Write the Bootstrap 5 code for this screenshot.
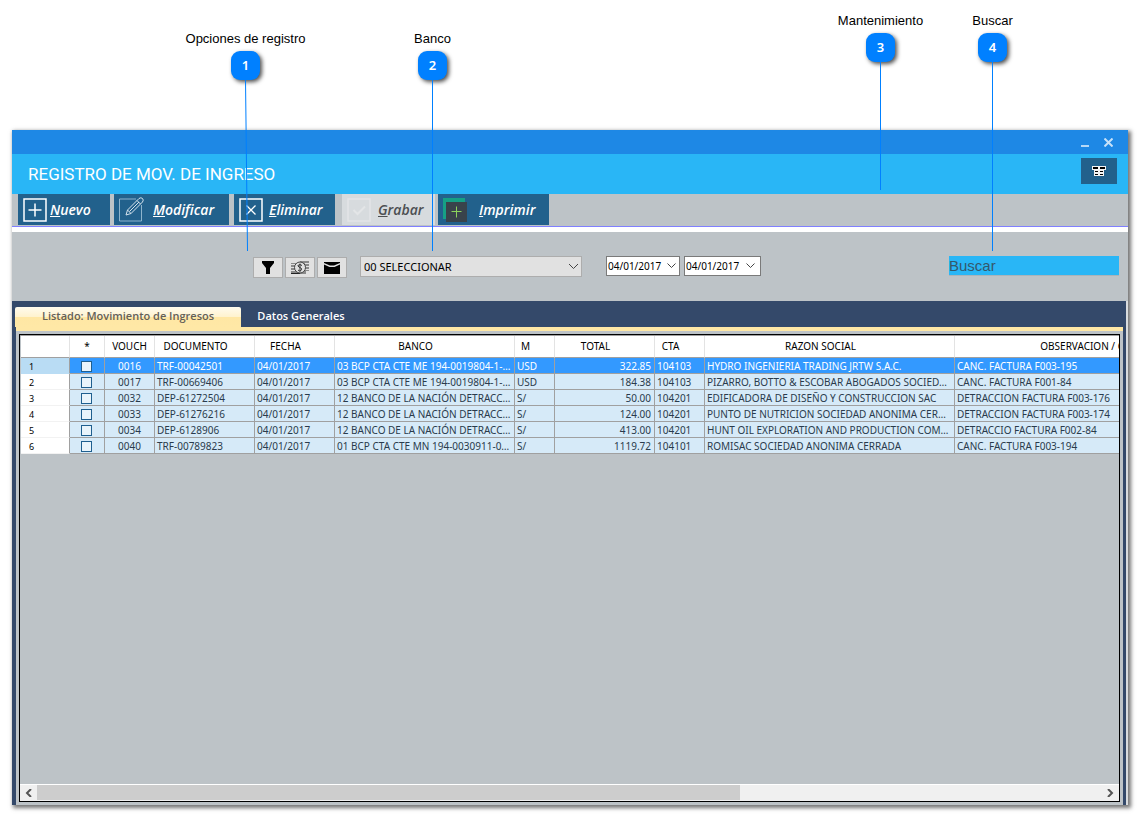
<!DOCTYPE html>
<html lang="es">
<head>
<meta charset="utf-8">
<meta name="viewport" content="width=device-width, initial-scale=1">
<title>Registro de mov. de ingreso</title>
<link href="https://cdn.jsdelivr.net/npm/bootstrap@5.3.0/dist/css/bootstrap.min.css" rel="stylesheet">
<style>
  :root { --navy: #34496a; --silver: #bdc3c7; --steel: #22618c; --sky: #29b6f6; --cream: #ffe8a6; --pin: #0080ff; }
  body { font-family: "Noto Sans", "Open Sans", sans-serif; font-size: 10px; color: #000; background: #fff; }
  .page { min-height: 100vh; padding: 130px 15px 9px 12px; }
  .window { background: var(--silver); box-shadow: 2px 2px 4px 1px rgba(0,0,0,.55); }
  .titlebar { height: 24px; background: #1e88e5; padding-right: 15px; gap: 15px; }
  .titlebar button, .header-bar button, .h-scroll button { border: 0; padding: 0; background: none; display: flex; align-items: center; justify-content: center; }
  .header-bar { height: 40px; background: var(--sky); padding: 0 11px 0 16px; }
  .header-bar h1 { font: 400 17px/20px Roboto, sans-serif; color: #fff; margin: 0; }
  .header-bar button { width: 36px; height: 26px; background: var(--steel); margin-bottom: 6px; }
  .tools { height: 33px; padding-left: 6px; border-bottom: 1px solid #8080ff; }
  .tool { height: 31px; border: 0; border-radius: 0; padding: 0 0 0 5px; background: var(--steel); color: #fff; font: italic 600 14px/20px "Open Sans", sans-serif; display: flex; align-items: center; text-align: left; white-space: nowrap; }
  .tool svg { flex: none; }
  .tool:disabled { background: #d7dbde; color: #4c4f52; }
  .w-nuevo { width: 92px; gap: 3px; margin-right: 4px; }
  .w-modificar { width: 115px; gap: 9px; margin-right: 5px; }
  .w-eliminar { width: 101px; gap: 6px; margin-right: 7px; }
  .w-grabar { width: 93px; gap: 7px; margin-right: 3px; }
  .w-imprimir { width: 111px; gap: 12px; }
  .filters { height: 74px; border-top: 5px solid #fff; padding: 24px 9px 0 241px; }
  .mini { width: 30px; height: 21px; margin: 1px 2px 0 0; padding: 0; border: 1px solid #adadad; background: #e1e1e1; display: flex; align-items: center; justify-content: center; }
  .bank { width: 222px; height: 21px; margin: 0 24px 0 11px; }
  .bank select { appearance: none; width: 100%; height: 100%; border: 1px solid #adadad; border-radius: 0; background: #e1e1e1; color: #000; font-size: 11px; line-height: 16px; padding: 0 20px 0 3px; }
  .bank svg { position: absolute; right: 3px; top: 7px; pointer-events: none; }
  .date-box { width: 74px; height: 20px; border: 1px solid #7a7a7a; background: #fff; margin-right: 4px; }
  .date-box.wide { width: 77px; }
  .date-box input { border: 0; padding: 0 0 0 1px; width: 56px; font-size: 10px; line-height: 16px; background: none; color: #000; }
  .date-box button { border: 0; padding: 0; background: none; flex: 1; display: flex; align-items: center; justify-content: center; }
  .search { width: 170px; height: 20px; border: 0; border-bottom: 1px solid #a9b4bb; border-radius: 0; padding: 0; background: var(--sky); font: 15px/18px "Liberation Sans", sans-serif; color: #35586b; }
  .search::placeholder { color: #35586b; opacity: 1; }
  .body-panel { background: var(--navy); border-right: 2px solid #d9dcde; padding: 6px 3px 0 3px; }
  .tab-strip .nav-link { height: 20px; padding: 0; border-radius: 0; color: #fff; font: 600 11px/18px "Open Sans", sans-serif; text-align: center; width: 120px; }
  .tab-strip .nav-link.active { width: 226px; color: #646058; background: linear-gradient(#fffbee, #fff3cf 48%, #ffe7a4 52%, var(--cream)); border-radius: 2px 2px 0 0; }
  .sheet { border-top: 4px solid var(--cream); background: var(--silver); margin-left: 1px; padding: 3px; }
  .grid-box { border: 1px solid #000; overflow: hidden; min-width: 0; }
  .grid-clip { overflow: hidden; border-top: 1px solid #a0a0a0; padding-left: 1px; }
  .grid-table { table-layout: fixed; width: 1233px; border-collapse: separate; border-spacing: 0; margin: 0; }
  .grid-table th, .grid-table td { padding: 0 2px; border-right: 1px solid #a0a0a0; border-bottom: 1px solid #a0a0a0; white-space: nowrap; overflow: hidden; text-overflow: ellipsis; }
  .grid-table thead th { height: 22px; line-height: 21px; background: #fff; font-weight: 400; text-align: center; border-right-color: #e3e3e3; }
  .grid-table thead th.sortable { padding-right: 20px; }
  .grid-table tbody td { height: 16px; line-height: 14px; padding-top: 1px; background: #d6eaf8; color: #2a3b4c; }
  .grid-table tbody td.text-end { padding-right: 3px; }
  .grid-table tbody th { height: 16px; line-height: 12px; background: #fff; font-weight: 400; font-size: 9px; padding: 3px 0 0 8px; border-bottom-color: #f2f2f2; }
  .grid-table tbody tr.current td { background: #3399ff; color: #fff; }
  .grid-table tbody tr.current th { background: #b9dcf4; border-bottom-color: #b9dcf4; }
  .grid-table input { appearance: none; display: block; width: 11px; height: 11px; margin: 0 0 0 9px; border: 1px solid #1f5f8f; background: #e9f4fb; }
  .h-scroll { height: 17px; border-top: 1px solid #fff; background: #f0f0f0; }
  .h-scroll button { width: 17px; }
  .h-thumb { width: 64%; background: #cdcdcd; margin-bottom: 1px; }
  .callout-pin { position: absolute; width: 141px; pointer-events: none; font: 13px/16px "Liberation Sans", sans-serif; text-align: center; z-index: 2; }
  .pin-num { width: 29px; height: 29px; border-radius: 9px; background: var(--pin); color: #fff; font: 600 13px/29px "Noto Sans", sans-serif; box-shadow: 2px 2px 4px rgba(0,0,0,.7); }
  .pin-low { top: 31px; } .pin-high { top: 13px; }
  .pin-line { display: block; }
  .at-opciones { left: 175px; } .at-banco { left: 362px; }
  .at-mant { right: 192px; } .at-buscar { right: 80px; }
</style>
</head>
<body>
<div class="page d-flex flex-column position-relative">

  <div class="callout-pin pin-low at-opciones d-flex flex-column align-items-center"><span class="mb-1">Opciones de registro</span><span class="pin-num">1</span>
    <svg class="pin-line" width="7" height="171"><path d="M3.5 0L5.5 171" stroke="#0080ff" stroke-width="1"/></svg></div>
  <div class="callout-pin pin-low at-banco d-flex flex-column align-items-center"><span class="mb-1">Banco</span><span class="pin-num">2</span>
    <svg class="pin-line" width="7" height="171"><path d="M3.5 0V171" stroke="#0080ff"/></svg></div>
  <div class="callout-pin pin-high at-mant d-flex flex-column align-items-center"><span class="mb-1">Mantenimiento</span><span class="pin-num">3</span>
    <svg class="pin-line" width="7" height="128"><path d="M3.5 0V128" stroke="#0080ff"/></svg></div>
  <div class="callout-pin pin-high at-buscar d-flex flex-column align-items-center"><span class="mb-1">Buscar</span><span class="pin-num">4</span>
    <svg class="pin-line" width="7" height="189"><path d="M3.5 0V189" stroke="#0080ff"/></svg></div>

  <main class="window d-flex flex-column flex-grow-1">
    <div class="titlebar d-flex justify-content-end align-items-center">
      <button type="button" aria-label="Minimizar"><svg width="8" height="10"><path d="M0 8h8v2H0z" fill="#b5d8f7"/></svg></button>
      <button type="button" aria-label="Cerrar"><svg width="9" height="9"><path d="M.5.5l8 8M8.500.5l-8 8" stroke="#c6e1f9" stroke-width="2"/></svg></button>
    </div>
    <header class="header-bar d-flex justify-content-between align-items-center">
      <h1>REGISTRO DE MOV. DE INGRESO</h1>
      <button type="button" aria-label="Vista de tabla"><svg width="14" height="10"><path d="M0 0h14v4h-2v6H2V4H0z" fill="#f4f4f4"/><path d="M1 1h5v2H1zM8 1h5v2H8zM3 5h3v1H3zM8 5h3v1H8zM3 8h3v1H3zM8 8h3v1H8z" fill="#000"/></svg></button>
    </header>

    <div class="tools d-flex align-items-start">
      <button type="button" class="tool w-nuevo"><svg width="24" height="24" fill="none" stroke="#fff"><path d="M1 1h22v22H1z" stroke-width="1.5"/><path d="M12 5.500v13M5.500 12h13" stroke-width="1.500"/></svg><span><u>N</u>uevo</span></button>
      <button type="button" class="tool w-modificar"><svg width="25" height="25" fill="none" stroke="#d5e3ed"><path d="M17 2H.5v22h22V8" stroke="#8eb4cd"/><path d="M7 18l1.500-5L20 1.500q2-1.500 3.500 0t0 3.500L12 16.500zM18 3.500L21.500 7M8.500 13l3.500 3.500M10.500 14.500L20 5"/></svg><span><u>M</u>odificar</span></button>
      <button type="button" class="tool w-eliminar"><svg width="24" height="24" fill="none" stroke="#fff"><path d="M1 1h22v22H1z" stroke-width="1.5"/><path d="M7.500 7.500l9 9M16.500 7.500l-9 9" stroke-width="1.300"/></svg><span><u>E</u>liminar</span></button>
      <button type="button" class="tool w-grabar" disabled><svg width="24" height="24" fill="none" stroke="#e3e5e7"><path d="M1 1h22v22H1z" stroke-width="1.500"/><path d="M6.500 12l4 4L18 8.500" stroke-width="2"/></svg><span><u>G</u>rabar</span></button>
      <button type="button" class="tool w-imprimir"><svg width="24" height="24"><path d="M0 0h22v21H0z" fill="#16a085"/><path d="M3 4h21v20H3z" fill="#39434b"/><path d="M13.500 8.500v11M8.500 13.500h10" stroke="#8bd35c"/></svg><span><u>I</u>mprimir</span></button>
    </div>

    <form class="filters d-flex align-items-start">
      <button type="button" class="mini" aria-label="Filtrar"><svg width="12" height="13"><path d="M0 0h12v2L8 7v6H4V7L0 2z"/></svg></button>
      <button type="button" class="mini" aria-label="Pagos"><svg width="18" height="15" fill="none"><path d="M0 3h9V1h9v10h-3v3H0z" fill="#8a8a8a"/><path d="M0 4.500h4M0 7.500h4M0 10.500h4M14 3.500h4M14 6.500h4M14 9.500h4" stroke="#e1e1e1"/><path d="M0 13.500h9" stroke="#222"/><circle cx="9" cy="7.500" r="5.500" fill="#e1e1e1" stroke="#444"/><path d="M11 5.500q-2-1.500-3.500-.5t.5 2 2.500 1.500-.5 2-3-.5M9 3.500v8" stroke="#333"/></svg></button>
      <button type="button" class="mini" aria-label="Archivar"><svg width="16" height="12"><path d="M0 0h16v1L10 3.500H6L0 1zM0 2.500L5.500 5h5L16 2.500V12H0z"/></svg></button>
      <div class="bank position-relative"><select aria-label="Banco"><option>00 SELECCIONAR</option></select><svg width="11" height="7" fill="none" stroke="#444"><path d="M1 1l4.500 4.500L10 1"/></svg></div>
      <div class="date-box d-flex"><input type="text" value="04/01/2017" aria-label="Desde"><button type="button" aria-label="Abrir calendario desde"><svg width="9" height="6" fill="none" stroke="#444"><path d="M.5.5l4 4 4-4"/></svg></button></div>
      <div class="date-box wide d-flex"><input type="text" value="04/01/2017" aria-label="Hasta"><button type="button" aria-label="Abrir calendario hasta"><svg width="9" height="6" fill="none" stroke="#444"><path d="M.5.5l4 4 4-4"/></svg></button></div>
      <input type="text" class="search ms-auto" placeholder="Buscar" aria-label="Buscar">
    </form>

    <section class="body-panel d-flex flex-column flex-grow-1">
      <nav class="tab-strip nav">
        <a class="nav-link active" href="#listado">Listado: Movimiento de Ingresos</a>
        <a class="nav-link" href="#datos">Datos Generales</a>
      </nav>
      <div class="sheet d-flex flex-column flex-grow-1" id="listado">
        <div class="grid-box d-flex flex-column flex-grow-1">
          <div class="grid-clip flex-grow-1">
            <table class="grid-table">
              <colgroup><col style="width:49px"><col style="width:35px"><col style="width:50px"><col style="width:100px"><col style="width:80px"><col style="width:180px"><col style="width:40px"><col style="width:100px"><col style="width:50px"><col style="width:250px"><col style="width:299px"></colgroup>
              <thead><tr><th></th><th>*</th><th>VOUCH</th><th class="sortable">DOCUMENTO</th><th class="sortable">FECHA</th><th class="sortable">BANCO</th><th class="sortable">M</th><th class="sortable">TOTAL</th><th class="sortable">CTA</th><th class="sortable">RAZON SOCIAL</th><th class="sortable">OBSERVACION / GLOSA</th></tr></thead>
              <tbody>
                <tr class="current"><th>1</th><td><input type="checkbox" aria-label="Fila 1"></td><td class="text-center">0016</td><td>TRF-00042501</td><td>04/01/2017</td><td>03 BCP CTA CTE ME 194-0019804-1-00</td><td>USD</td><td class="text-end">322.85</td><td>104103</td><td>HYDRO INGENIERIA TRADING JRTW S.A.C.</td><td>CANC. FACTURA F003-195</td></tr>
                <tr><th>2</th><td><input type="checkbox" aria-label="Fila 2"></td><td class="text-center">0017</td><td>TRF-00669406</td><td>04/01/2017</td><td>03 BCP CTA CTE ME 194-0019804-1-00</td><td>USD</td><td class="text-end">184.38</td><td>104103</td><td>PIZARRO, BOTTO &amp; ESCOBAR ABOGADOS SOCIEDAD</td><td>CANC. FACTURA F001-84</td></tr>
                <tr><th>3</th><td><input type="checkbox" aria-label="Fila 3"></td><td class="text-center">0032</td><td>DEP-61272504</td><td>04/01/2017</td><td>12 BANCO DE LA NACIÓN DETRACCION</td><td>S/</td><td class="text-end">50.00</td><td>104201</td><td>EDIFICADORA DE DISEÑO Y CONSTRUCCION SAC</td><td>DETRACCION FACTURA F003-176</td></tr>
                <tr><th>4</th><td><input type="checkbox" aria-label="Fila 4"></td><td class="text-center">0033</td><td>DEP-61276216</td><td>04/01/2017</td><td>12 BANCO DE LA NACIÓN DETRACCION</td><td>S/</td><td class="text-end">124.00</td><td>104201</td><td>PUNTO DE NUTRICION SOCIEDAD ANONIMA CERRADA</td><td>DETRACCION FACTURA F003-174</td></tr>
                <tr><th>5</th><td><input type="checkbox" aria-label="Fila 5"></td><td class="text-center">0034</td><td>DEP-6128906</td><td>04/01/2017</td><td>12 BANCO DE LA NACIÓN DETRACCION</td><td>S/</td><td class="text-end">413.00</td><td>104201</td><td>HUNT OIL EXPLORATION AND PRODUCTION COMPANY</td><td>DETRACCIO FACTURA F002-84</td></tr>
                <tr><th>6</th><td><input type="checkbox" aria-label="Fila 6"></td><td class="text-center">0040</td><td>TRF-00789823</td><td>04/01/2017</td><td>01 BCP CTA CTE MN 194-0030911-0-00</td><td>S/</td><td class="text-end">1119.72</td><td>104101</td><td>ROMISAC SOCIEDAD ANONIMA CERRADA</td><td>CANC. FACTURA F003-194</td></tr>
              </tbody>
            </table>
          </div>
          <div class="h-scroll d-flex">
            <button type="button" aria-label="Desplazar a la izquierda"><svg width="7" height="8" fill="none" stroke="#555" stroke-width="2"><path d="M6 0L2 4l4 4"/></svg></button>
            <div class="h-thumb"></div>
            <button type="button" class="ms-auto" aria-label="Desplazar a la derecha"><svg width="7" height="8" fill="none" stroke="#555" stroke-width="2"><path d="M1 0l4 4-4 4"/></svg></button>
          </div>
        </div>
      </div>
    </section>
  </main>
</div>
<script src="https://cdn.jsdelivr.net/npm/bootstrap@5.3.0/dist/js/bootstrap.bundle.min.js"></script>
</body>
</html>
